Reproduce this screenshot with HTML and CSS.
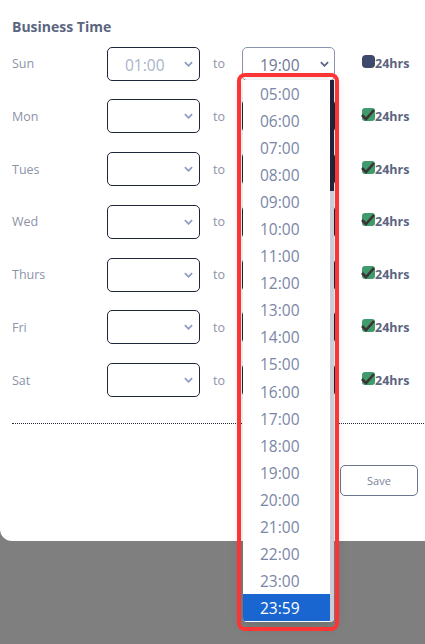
FILE: index.html
```html
<!DOCTYPE html>
<html>
<head>
<meta charset="utf-8">
<link rel="stylesheet" href="styles.css">
</head>
<body>
<div class="card">
  <h2 class="title">Business Time</h2>
  <div class="rows">
    <div class="row">
      <span class="day">Sun</span>
      <div class="sel sel-from"><span class="val val-light">01:00</span><svg class="chev" viewBox="0 0 10 6"><polyline points="1,1 5,5 9,1"/></svg></div>
      <span class="to">to</span>
      <div class="sel sel-open"><span class="val">19:00</span><svg class="chev chev-dark" viewBox="0 0 10 6"><polyline points="1,1 5,5 9,1"/></svg></div>
      <span class="cb cb-off"></span><span class="hrs">24hrs</span>
    </div>
    <div class="row">
      <span class="day">Mon</span>
      <div class="sel"><svg class="chev" viewBox="0 0 10 6"><polyline points="1,1 5,5 9,1"/></svg></div>
      <span class="to">to</span>
      <div class="sel"></div>
      <span class="cb"><svg viewBox="0 0 14 14"><path d="M1 7 L5 11 L13 2"/></svg></span><span class="hrs">24hrs</span>
    </div>
    <div class="row">
      <span class="day">Tues</span>
      <div class="sel"><svg class="chev" viewBox="0 0 10 6"><polyline points="1,1 5,5 9,1"/></svg></div>
      <span class="to">to</span>
      <div class="sel"></div>
      <span class="cb"><svg viewBox="0 0 14 14"><path d="M1 7 L5 11 L13 2"/></svg></span><span class="hrs">24hrs</span>
    </div>
    <div class="row">
      <span class="day">Wed</span>
      <div class="sel"><svg class="chev" viewBox="0 0 10 6"><polyline points="1,1 5,5 9,1"/></svg></div>
      <span class="to">to</span>
      <div class="sel"></div>
      <span class="cb"><svg viewBox="0 0 14 14"><path d="M1 7 L5 11 L13 2"/></svg></span><span class="hrs">24hrs</span>
    </div>
    <div class="row">
      <span class="day">Thurs</span>
      <div class="sel"><svg class="chev" viewBox="0 0 10 6"><polyline points="1,1 5,5 9,1"/></svg></div>
      <span class="to">to</span>
      <div class="sel"></div>
      <span class="cb"><svg viewBox="0 0 14 14"><path d="M1 7 L5 11 L13 2"/></svg></span><span class="hrs">24hrs</span>
    </div>
    <div class="row">
      <span class="day">Fri</span>
      <div class="sel"><svg class="chev" viewBox="0 0 10 6"><polyline points="1,1 5,5 9,1"/></svg></div>
      <span class="to">to</span>
      <div class="sel"></div>
      <span class="cb"><svg viewBox="0 0 14 14"><path d="M1 7 L5 11 L13 2"/></svg></span><span class="hrs">24hrs</span>
    </div>
    <div class="row">
      <span class="day">Sat</span>
      <div class="sel"><svg class="chev" viewBox="0 0 10 6"><polyline points="1,1 5,5 9,1"/></svg></div>
      <span class="to">to</span>
      <div class="sel"></div>
      <span class="cb"><svg viewBox="0 0 14 14"><path d="M1 7 L5 11 L13 2"/></svg></span><span class="hrs">24hrs</span>
    </div>
  </div>
  <div class="divider"></div>
  <div class="actions"><button class="save">Save</button></div>
</div>

<div class="dropdown">
  <ul class="list">
    <li>05:00</li><li>06:00</li><li>07:00</li><li>08:00</li><li>09:00</li>
    <li>10:00</li><li>11:00</li><li>12:00</li><li>13:00</li><li>14:00</li>
    <li>15:00</li><li>16:00</li><li>17:00</li><li>18:00</li><li>19:00</li>
    <li>20:00</li><li>21:00</li><li>22:00</li><li>23:00</li><li class="active">23:59</li>
  </ul>
  <div class="scroll"><div class="thumb"></div></div>
</div>
<div class="highlight"></div>
</body>
</html>
```

FILE: styles.css
```css
html, body {
  margin: 0;
  padding: 0;
}
body {
  background: #7f7f7f;
  width: 425px;
  height: 644px;
  overflow: hidden;
  position: relative;
  font-family: "Open Sans", "DejaVu Sans", sans-serif;
}
.card {
  background: #fff;
  width: 440px;
  height: 541px;
  box-sizing: border-box;
  border-radius: 0 0 0 12px;
  padding: 17px 0 0 12px;
}
.title {
  margin: 0;
  font-size: 14px;
  line-height: 20px;
  font-weight: 700;
  color: #5b6580;
}
.rows {
  margin-top: 9.5px;
  display: flex;
  flex-direction: column;
  gap: 18.8px;
}
.row {
  display: flex;
  align-items: center;
  height: 34px;
}
.day {
  width: 95px;
  font-size: 12.5px;
  color: #8b93a8;
}
.sel {
  width: 93px;
  height: 34px;
  box-sizing: border-box;
  border: 1px solid #1f2638;
  border-radius: 5px;
  position: relative;
  display: flex;
  align-items: center;
  padding-left: 17px;
  padding-top: 2px;
}
.sel-open {
  border-color: #8a94ad;
}
.val {
  font-size: 15.5px;
  color: #6e7893;
}
.val-light {
  color: #a9b3ca;
}
.chev {
  position: absolute;
  right: 6px;
  top: 13px;
  width: 9px;
  height: 6px;
  fill: none;
  stroke: #8e9dc2;
  stroke-width: 2;
}
.chev-dark {
  stroke: #5a6480;
  right: 5px;
}
.to {
  width: 29px;
  margin-left: 13px;
  font-size: 12.5px;
  color: #8b93a8;
}
.cb {
  width: 13px;
  height: 13px;
  margin-left: 27px;
  margin-top: -4px;
  border-radius: 3px;
  background: #3f9b6b;
  position: relative;
  flex: none;
}
.cb svg {
  position: absolute;
  left: -1px;
  top: 0;
  width: 14px;
  height: 14px;
  fill: none;
  stroke: #3b3434;
  stroke-width: 2.6;
}
.cb-off {
  background: #3d4a6b;
  border-radius: 4px;
}
.hrs {
  font-size: 12.5px;
  font-weight: 700;
  color: #5b6580;
  margin-left: 0;
}
.divider {
  margin-top: 26px;
  border-top: 1px dotted #2a2f3d;
}
.actions {
  margin-top: 41px;
  padding-left: 328px;
}
.save {
  width: 78px;
  height: 31px;
  box-sizing: border-box;
  border: 1px solid #6b7590;
  border-radius: 5px;
  background: #fff;
  font-family: "Open Sans", "DejaVu Sans", sans-serif;
  font-size: 11px;
  color: #7a839b;
  padding: 0;
}
.dropdown {
  position: absolute;
  left: 243px;
  top: 79.5px;
  width: 91px;
  height: 542px;
  background: #fff;
  border-radius: 0 0 4px 4px;
  overflow: hidden;
  box-shadow: 0 2px 14px rgba(0, 0, 0, 0.18);
}
.list {
  list-style: none;
  margin: 0;
  padding: 0;
  width: 87px;
}
.list li {
  box-sizing: border-box;
  height: 27.1px;
  line-height: 25px;
  padding-top: 2px;
  padding-left: 17px;
  font-size: 15.5px;
  color: #7a86a6;
}
.list li.active {
  background: #1a66d1;
  color: #fff;
}
.scroll {
  position: absolute;
  right: 0;
  top: 0;
  width: 4px;
  height: 100%;
  background: #c9cdd8;
}
.thumb {
  height: 111px;
  background: #1e2538;
}
.highlight {
  position: absolute;
  left: 237px;
  top: 73px;
  width: 102px;
  height: 558px;
  box-sizing: border-box;
  border: 4px solid #fb3434;
  border-radius: 8px;
}
```
